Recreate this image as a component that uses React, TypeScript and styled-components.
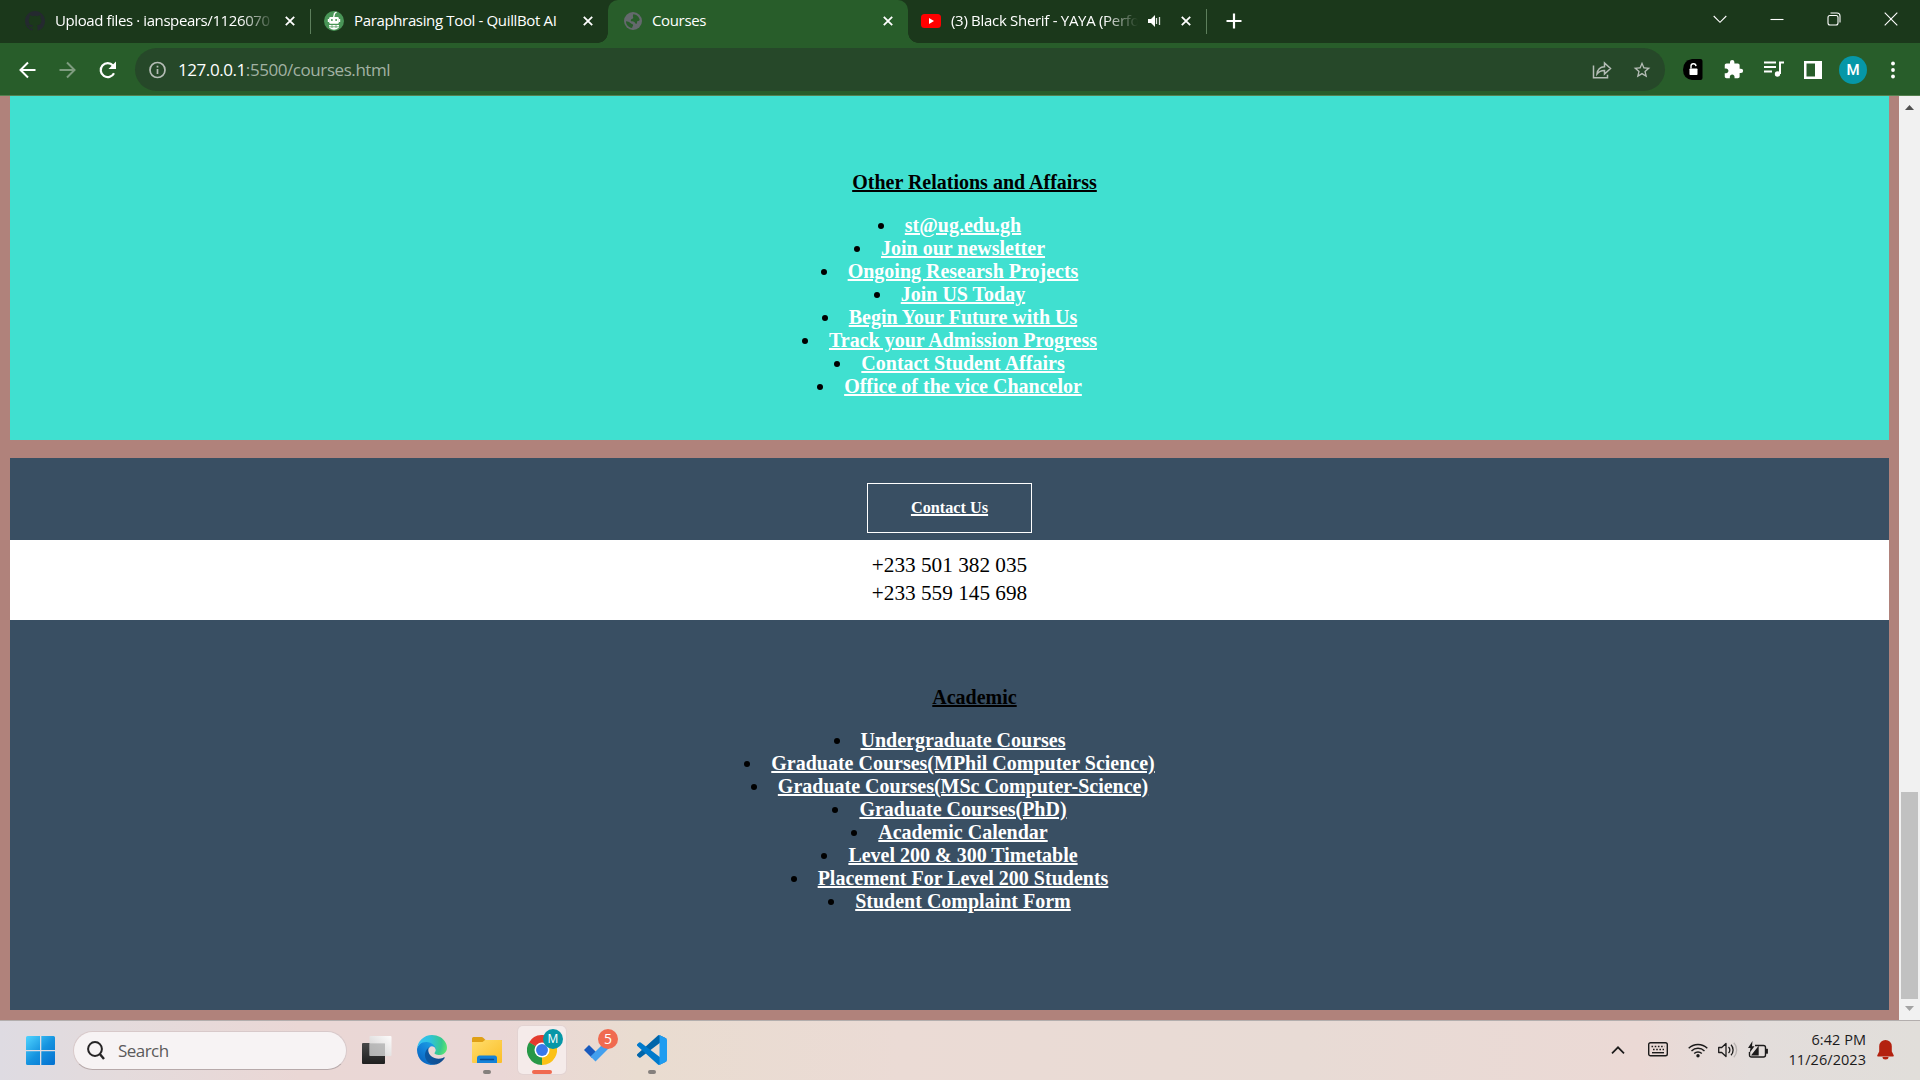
import React from "react";
import styled, { createGlobalStyle, css } from "styled-components";

const Global = createGlobalStyle`
  * { box-sizing: border-box; }
  html, body { margin: 0; padding: 0; overflow: hidden; }
  svg { display: block; flex: none; }
`;

const ui = css`
  font-family: "Open Sans", "Noto Sans", sans-serif;
`;

const Screen = styled.div`
  width: 1920px;
  height: 1080px;
  display: flex;
  flex-direction: column;
  overflow: hidden;
`;

/* ---------- Browser tab strip ---------- */
const TabStrip = styled.div`
  ${ui}
  height: 43px;
  display: flex;
  background: #1b381b;
  color: #fff;
`;

const Tab = styled.div<{ $width: number; $pad: number; $active?: boolean; $gap: number }>`
  position: relative;
  width: ${(p) => p.$width}px;
  height: 43px;
  flex: none;
  display: flex;
  align-items: center;
  padding: 0 15px 1px ${(p) => p.$pad}px;
  gap: ${(p) => p.$gap}px;
  background: ${(p) => (p.$active ? "#285d2a" : "transparent")};
  border-radius: ${(p) => (p.$active ? "10px 10px 0 0" : "0")};
  ${(p) =>
    p.$active &&
    css`
      &::before,
      &::after {
        content: "";
        position: absolute;
        bottom: 0;
        width: 10px;
        height: 10px;
      }
      &::before {
        left: -10px;
        background: radial-gradient(circle at 0 0, transparent 9.5px, #285d2a 10px);
      }
      &::after {
        right: -10px;
        background: radial-gradient(circle at 100% 0, transparent 9.5px, #285d2a 10px);
      }
    `}
`;

const TabTitle = styled.span<{ $fade?: boolean; $track: number }>`
  flex: 1;
  min-width: 0;
  white-space: nowrap;
  font-size: 15px;
  line-height: 22px;
  padding-bottom: 2px;
  letter-spacing: ${(p) => p.$track}px;
  ${(p) => p.$fade && css`mask-image: linear-gradient(to right, #000 calc(100% - 34px), transparent);`}
`;

const Divider = styled.i`
  width: 1px;
  height: 25px;
  margin-top: 9px;
  flex: none;
  background: #5d7f5c;
`;

const NewTab = styled.div`
  display: flex;
  align-items: center;
  padding: 0 0 1px 19px;
  flex: 1;
`;

const WindowButtons = styled.div`
  display: flex;
  height: 37px;
  align-items: center;
  gap: 43px;
  padding-right: 22px;
`;

/* ---------- Toolbar ---------- */
const Toolbar = styled.div`
  ${ui}
  height: 53px;
  display: flex;
  align-items: center;
  padding: 5px 25px 4px 18px;
  background: #285d2a;
  border-bottom: 1px solid #55804f;
`;

const NavButtons = styled.div`
  width: 117px;
  display: flex;
  gap: 20px;
`;

const Omnibox = styled.div`
  width: 1530px;
  height: 43px;
  display: flex;
  align-items: center;
  padding: 0 13px 0 12px;
  border-radius: 22px;
  background: #264829;
`;

const Url = styled.span`
  flex: 1;
  margin-left: 11px;
  font-size: 17px;
  letter-spacing: -0.43px;
  color: #a2b2a3;
  b { font-weight: 400; color: #fff; }
`;

const OmniActions = styled.div`
  display: flex;
  align-items: center;
  gap: 20px;
`;

const Extensions = styled.div`
  flex: 1;
  display: flex;
  align-items: center;
  justify-content: space-between;
  padding-left: 18px;
`;

const Avatar = styled.span`
  width: 28px;
  height: 28px;
  margin: 0 4px 0 -3px;
  border-radius: 50%;
  display: grid;
  place-items: center;
  background: #0697a7;
  color: #fff;
  font: 500 15px Roboto, sans-serif;
`;

/* ---------- Page ---------- */
const Viewport = styled.div`
  height: 924px;
  display: flex;
  background: #b0827b;
`;

const Page = styled.main`
  width: 1899px;
  padding: 0 10px;
  display: flex;
  flex-direction: column;
  font-family: "Liberation Serif", "Times New Roman", serif;
  text-align: center;
`;

const Section = styled.section<{ $bg: string; $height: number; $top: number; $gap?: number }>`
  height: ${(p) => p.$height}px;
  padding-top: ${(p) => p.$top}px;
  margin-bottom: ${(p) => p.$gap ?? 0}px;
  background: ${(p) => p.$bg};
`;

const underlined = css`
  text-decoration: underline;
  text-decoration-thickness: 2px;
  text-underline-offset: 1px;
`;

const Heading = styled.h4`
  margin: 0 0 20px;
  padding-left: 50px;
  font-size: 20px;
  line-height: 23px;
  color: #000;
  ${underlined}
`;

const List = styled.ul`
  margin: 0;
  padding: 0;
  list-style: none;
`;

const Item = styled.li`
  height: 23px;
  display: flex;
  justify-content: center;
  align-items: center;
  font-size: 20px;
  line-height: 23px;
  font-weight: 700;
  &::before {
    content: "";
    width: 6px;
    height: 6px;
    margin: 1px 21px 0 0;
    border-radius: 50%;
    background: #000;
  }
`;

const Link = styled.a`
  color: #fff;
  ${underlined}
`;

const ContactButton = styled.a`
  display: flex;
  align-items: center;
  justify-content: center;
  width: 165px;
  height: 50px;
  margin: 0 auto;
  padding-top: 1px;
  border: 1px solid #fff;
  color: #fff;
  font-size: 16.25px;
  font-weight: 700;
  ${underlined}
`;

const Phone = styled.p`
  margin: 0;
  font-size: 21.25px;
  line-height: 28px;
  color: #000;
`;

const ScrollBar = styled.div`
  width: 21px;
  display: flex;
  flex-direction: column;
  align-items: center;
  justify-content: space-between;
  padding: 9px 0;
  background: #f1f1f1;
`;

const Thumb = styled.div`
  width: 17px;
  height: 207px;
  margin: auto 0 7px;
  background: #c1c1c1;
`;

/* ---------- Taskbar ---------- */
const Taskbar = styled.footer`
  ${ui}
  height: 60px;
  display: flex;
  align-items: center;
  padding: 0 26px 1px;
  border-top: 1px solid #b3aead;
  background: linear-gradient(90deg, #dedbe2 0, #e4dbdc 120px, #ead7d5 300px, #ead7d6 500px, #e9dcd0 640px, #ebdbd5 900px, #e8dbd5 1300px, #ebd9d5 1640px, #e3dddb 1750px, #e1deda 1920px);
`;

const StartButton = styled.span`
  margin-top: 2px;
`;

const SearchBox = styled.div`
  width: 274px;
  height: 39px;
  margin: 1px 15px 0 17px;
  display: flex;
  align-items: center;
  gap: 13px;
  padding-left: 13px;
  border: 1px solid #d8c9ca;
  border-bottom-color: #b7a9aa;
  border-radius: 20px;
  background: #f7f3f4;
  color: #5c5a5b;
  font-size: 17px;
  letter-spacing: -0.55px;
`;

const Apps = styled.div`
  display: flex;
  gap: 7px;
  margin-left: -9px;
`;

const AppButton = styled.div<{ $active?: boolean }>`
  position: relative;
  width: 48px;
  height: 48px;
  display: grid;
  place-items: center;
  border-radius: 5px;
  background: ${(p) => (p.$active ? "#f5ebea" : "transparent")};
  box-shadow: ${(p) => (p.$active ? "0 0 0 1px #e3d3d2" : "none")};
`;

const Running = styled.i<{ $active?: boolean }>`
  position: absolute;
  bottom: 0;
  left: 50%;
  transform: translateX(-50%);
  width: ${(p) => (p.$active ? 20 : 8)}px;
  height: 4px;
  border-radius: 2px;
  background: ${(p) => (p.$active ? "#f06a50" : "#85807d")};
`;

const Badge = styled.span<{ $bg: string; $size: number }>`
  position: absolute;
  top: 3px;
  right: 3px;
  width: 20px;
  height: 20px;
  border-radius: 50%;
  display: grid;
  place-items: center;
  background: ${(p) => p.$bg};
  color: #fff;
  font-size: ${(p) => p.$size}px;
  line-height: 20px;
`;

const Tray = styled.div`
  flex: 1;
  display: flex;
  align-items: center;
  justify-content: flex-end;
`;

const TrayIcon = styled.span<{ $gap: number }>`
  margin-right: ${(p) => p.$gap}px;
  margin-bottom: 1px;
`;

const Clock = styled.div`
  width: 98px;
  margin-right: 11px;
  padding-bottom: 1px;
  text-align: right;
  font-size: 14.5px;
  line-height: 20px;
  letter-spacing: 0.05px;
  white-space: nowrap;
  color: #1c1b1b;
`;

/* ---------- Icons ---------- */
const Close = () => (
  <svg width="10" height="10" viewBox="0 0 10 10" stroke="#fff" strokeWidth="1.8">
    <path d="M.8.8l8.4 8.4M9.2.8L.8 9.2" />
  </svg>
);

const GitHub = () => (
  <svg width="20" height="20" viewBox="0 0 16 16" fill="#24292f">
    <path d="M8 0C3.58 0 0 3.58 0 8c0 3.54 2.29 6.53 5.47 7.59.4.07.55-.17.55-.38v-1.34c-2.23.48-2.69-1.07-2.69-1.07-.36-.92-.89-1.17-.89-1.17-.73-.5.05-.49.05-.49.81.06 1.23.83 1.23.83.72 1.23 1.88.87 2.34.67.07-.52.28-.88.51-1.08-1.78-.2-3.64-.89-3.64-3.95 0-.87.31-1.59.82-2.15-.08-.2-.36-1.02.08-2.12 0 0 .67-.21 2.2.82a7.6 7.6 0 014 0c1.53-1.04 2.2-.82 2.2-.82.44 1.1.16 1.92.08 2.12.51.56.82 1.27.82 2.15 0 3.07-1.87 3.75-3.65 3.95.29.25.54.73.54 1.48v2.2c0 .21.15.46.55.38A8 8 0 0016 8c0-4.42-3.58-8-8-8z" />
  </svg>
);

const QuillBot = () => (
  <svg width="20" height="20" viewBox="0 0 20 20">
    <circle cx="10" cy="10" r="10" fill="#499557" />
    <path d="M9.5 7l1-4.5 2-1.5" stroke="#fff" strokeWidth="1.3" fill="none" />
    <rect x="5.2" y="6" width="9.6" height="6.8" rx="1.2" fill="#fff" />
    <rect x="3.8" y="8" width="1.6" height="3" fill="#fff" />
    <rect x="14.6" y="8" width="1.6" height="3" fill="#fff" />
    <circle cx="7.9" cy="9" r="1" fill="#499557" />
    <circle cx="12.1" cy="9" r="1" fill="#499557" />
    <path d="M5 14h10v2.5Q10 21 5 16.500z" fill="#fff" />
    <path d="M5 15.800h10M8 14v3M12 14v3" stroke="#499557" strokeWidth=".7" />
  </svg>
);

const Globe = () => (
  <svg width="18" height="18" viewBox="0 0 18 18">
    <circle cx="9" cy="9" r="9" fill="#64696d" />
    <path d="M9.500 2.200c2.800.2 5.700 2.400 6.200 5.800-1 1.400-2 .6-2.500 1.500s.4 2-.9 2.200-1.200-1.600-2.300-2c-1-.4-2.800.2-3.200-1-.4-1.300 1.200-1.700 2.200-2.200S8 3.500 9.500 2.200zM2 9.200c1.800.5 3.400.6 4.300 1.700s2.600.8 2.800 2c.2 1-.9 1.300-1 3C4.500 15.500 1.900 12.700 2 9.200z" fill="#285d2a" />
  </svg>
);

const YouTube = () => (
  <svg width="20" height="14" viewBox="0 0 20 14">
    <rect width="20" height="14" rx="3.500" fill="#f00" />
    <path d="M8 4l5 3-5 3z" fill="#fff" />
  </svg>
);

const Speaker = () => (
  <svg width="13" height="12" viewBox="0 0 13 12" fill="#fff">
    <path d="M0 4h3l4-4v12L3 8H0z" />
    <path d="M8.500 3v6M11.500 2v8" stroke="#fff" strokeWidth="1.300" opacity=".85" />
  </svg>
);

const Plus = () => (
  <svg width="16" height="16" viewBox="0 0 16 16" stroke="#fff" strokeWidth="2.200">
    <path d="M8 .5v15M.5 8h15" />
  </svg>
);

const Arrow = ({ flip }: { flip?: boolean }) => (
  <svg width="20" height="20" viewBox="0 0 20 20" fill="none" stroke={flip ? "#7e9c7f" : "#fff"} strokeWidth="2">
    <path d={flip ? "M1.500 10h15M9 2.500l7.500 7.500-7.500 7.500" : "M17.500 10h-15M10 2.500L2.500 10l7.500 7.500"} />
  </svg>
);

const Reload = () => (
  <svg width="20" height="20" viewBox="0 0 20 20" fill="none" stroke="#fff" strokeWidth="2.200">
    <path d="M16 13.200A7 7 0 1 1 15 5.500" />
    <path d="M18 1.500v7.500H10.500z" fill="#fff" stroke="none" />
  </svg>
);

const Info = () => (
  <svg width="20" height="20" viewBox="0 0 20 20" fill="none" stroke="#b5bdb6" strokeWidth="1.700">
    <circle cx="10.500" cy="10" r="7.500" />
    <path d="M10.500 9v5M10.500 5.800v1.700" />
  </svg>
);

const Share = () => (
  <svg width="20" height="18" viewBox="0 0 20 18" fill="none" stroke="#b5bdb6" strokeWidth="1.500">
    <path d="M1.500 4.500v12.300h14v-3" />
    <path d="M5 13c.5-4.500 3-7 7.500-7.200V2l6 5.500-6 5.500V9.500C9.300 9.400 7 10.500 5 13z" />
  </svg>
);

const Star = () => (
  <svg width="20" height="20" viewBox="0 0 24 24" fill="#b5bdb6">
    <path d="M22 9.240l-7.190-.62L12 2 9.190 8.630 2 9.240l5.460 4.730L5.820 21 12 17.270 18.180 21l-1.630-7.030L22 9.240zM12 15.400l-3.760 2.270 1-4.280-3.320-2.880 4.380-.38L12 6.100l1.710 4.040 4.380.38-3.320 2.880 1 4.280L12 15.400z" />
  </svg>
);

const LockExt = () => (
  <svg width="20" height="21" viewBox="0 0 20 21">
    <path d="M9 0h8.500Q19.500 0 19.500 2v17q0 2-2 2H9Q0 19.500 0 10.500T9 0z" fill="#000" />
    <rect x="6.500" y="9.500" width="8" height="6.500" rx=".8" fill="#fff" />
    <path d="M8 9.500V7.500a2.500 2.500 0 0 1 5-.4" fill="none" stroke="#fff" strokeWidth="1.400" />
  </svg>
);

const Puzzle = () => (
  <svg width="21" height="21" viewBox="0 0 24 24" fill="#fff">
    <path d="M20.500 11H19V7c0-1.100-.9-2-2-2h-4V3.500a2.500 2.500 0 0 0-5 0V5H4c-1.100 0-1.990.9-1.990 2v3.800H3.500c1.490 0 2.700 1.210 2.700 2.700s-1.210 2.700-2.700 2.700H2V20c0 1.100.9 2 2 2h3.800v-1.500c0-1.490 1.210-2.700 2.700-2.700s2.700 1.210 2.700 2.700V22H17c1.100 0 2-.9 2-2v-4h1.500a2.500 2.500 0 0 0 0-5z" />
  </svg>
);

const Playlist = () => (
  <svg width="20" height="17" viewBox="0 0 20 17" fill="none" stroke="#fff" strokeWidth="2">
    <path d="M0 1.500h12M0 6h12M0 10.500h8M16 13V1.500h4" />
    <circle cx="13.500" cy="13" r="2.700" fill="#fff" stroke="none" />
  </svg>
);

const SidePanel = () => (
  <svg width="18" height="18" viewBox="0 0 18 18">
    <path d="M0 0h18v18H0zM2.500 2.500v13h8.500v-13z" fill="#fff" fillRule="evenodd" />
  </svg>
);

const Dots = () => (
  <svg width="4" height="18" viewBox="0 0 4 18" fill="#fff">
    <circle cx="2" cy="2.500" r="1.900" /><circle cx="2" cy="9" r="1.900" /><circle cx="2" cy="15.500" r="1.900" />
  </svg>
);

const WinIcon = ({ d }: { d: string }) => (
  <svg width="14" height="14" viewBox="0 0 14 14" fill="none" stroke="#fff" strokeWidth="1.100">
    <path d={d} />
  </svg>
);

const Triangle = ({ down }: { down?: boolean }) => (
  <svg width="9" height="5" viewBox="0 0 9 5" fill={down ? "#a3a3a3" : "#505050"}>
    <path d={down ? "M0 0h9L4.500 5z" : "M0 5h9L4.500 0z"} />
  </svg>
);

const Windows = () => (
  <svg width="30" height="30" viewBox="0 0 30 30">
    <defs>
      <linearGradient id="win" gradientUnits="userSpaceOnUse" x1="0" y1="0" x2="26" y2="28">
        <stop offset="0" stopColor="#50d4ff" /><stop offset=".55" stopColor="#1593df" /><stop offset="1" stopColor="#0574d2" />
      </linearGradient>
    </defs>
    <path fill="url(#win)" d="M1.500 0H14v14H0V1.500Q0 0 1.500 0zM15.300 0h12.200Q29 0 29 1.500V14H15.300zM0 15.300h14V29H1.500Q0 29 0 27.500zM15.300 15.300H29v12.200q0 1.500-1.500 1.500H15.300z" />
  </svg>
);

const SearchIcon = () => (
  <svg width="18" height="19" viewBox="0 0 18 19" fill="none" stroke="#262425" strokeWidth="2">
    <circle cx="8" cy="8" r="6.900" /><path d="M12.800 13l4.200 5" strokeWidth="2.400" />
  </svg>
);

const TaskView = () => (
  <svg width="30" height="30" viewBox="0 0 30 30">
    <defs>
      <linearGradient id="tv1" x1="0" y1="0" x2="0" y2="1"><stop offset="0" stopColor="#484848" /><stop offset="1" stopColor="#1f1f1f" /></linearGradient>
      <linearGradient id="tv2" x1="0" y1="1" x2="1" y2="0"><stop offset="0" stopColor="#ccc" /><stop offset="1" stopColor="#fff" /></linearGradient>
    </defs>
    <rect x="0" y="8" width="23" height="21" rx="1" fill="url(#tv1)" />
    <rect x="7.500" y="1" width="22" height="20" rx="1" fill="url(#tv2)" opacity=".93" />
    <path d="M7.500 8.500H23V21H7.500z" fill="#aaa" opacity=".65" />
  </svg>
);

const Edge = () => (
  <svg width="30" height="30" viewBox="0 0 256 256">
    <defs>
      <linearGradient id="e1" gradientUnits="userSpaceOnUse" x1="63" y1="177" x2="241" y2="177"><stop offset="0" stopColor="#0c59a4" /><stop offset="1" stopColor="#114a8b" /></linearGradient>
      <linearGradient id="e2" gradientUnits="userSpaceOnUse" x1="157" y1="100" x2="46" y2="222"><stop offset="0" stopColor="#1b9de2" /><stop offset=".5" stopColor="#1383d9" /><stop offset="1" stopColor="#0b6ac4" /></linearGradient>
      <radialGradient id="e3" gradientUnits="userSpaceOnUse" cx="26" cy="60" r="245"><stop offset="0" stopColor="#35c1f1" /><stop offset=".35" stopColor="#2fc2df" /><stop offset=".75" stopColor="#36c98e" /><stop offset="1" stopColor="#66eb6e" /></radialGradient>
    </defs>
    <path d="M231 190.500c-3.400 1.800-6.900 3.400-10.500 4.700a101.900 101.900 0 0 1-35.900 6.500c-47.300 0-88.500-32.500-88.500-74.300a31.500 31.500 0 0 1 16.400-27.300c-42.800 1.800-53.800 46.400-53.800 72.500 0 74 68.100 81.400 82.800 81.400 7.900 0 19.800-2.300 27-4.600l1.300-.4a128.300 128.300 0 0 0 66.600-52.800 4 4 0 0 0-5.400-5.700z" fill="url(#e1)" />
    <path d="M105.700 241.400a79.200 79.200 0 0 1-22.700-21.300 80.700 80.700 0 0 1 29.500-120c3.200-1.500 8.500-4.100 15.600-4a32.400 32.400 0 0 1 25.700 13 31.900 31.900 0 0 1 6.300 18.700c0-.2 24.500-79.600-80-79.600-43.900 0-80 41.700-80 78.200a130.200 130.200 0 0 0 12.100 56 128 128 0 0 0 156.400 67 75.500 75.500 0 0 1-62.900-8z" fill="url(#e2)" />
    <path d="M152.300 148.900c-.9 1-3.400 2.500-3.400 5.600 0 2.600 1.700 5.200 4.800 7.300 14.300 10 41.400 8.600 41.500 8.600a59.600 59.600 0 0 0 30.300-8.300 61.400 61.400 0 0 0 30.400-52.900c.3-22.400-8-37.300-11.300-43.900C223.500 23.900 177.700 0 128 0A128 128 0 0 0 0 126.200c.5-36.500 36.800-66 80-66 3.500 0 23.500.3 42 10a72.600 72.600 0 0 1 30.900 29.300c6.100 10.600 7.200 24.100 7.200 29.500s-2.700 13.300-7.800 19.900z" fill="url(#e3)" />
  </svg>
);

const Explorer = () => (
  <svg width="30" height="30" viewBox="0 0 30 30">
    <defs><linearGradient id="fe" x1="0" y1="0" x2="1" y2="1"><stop offset="0" stopColor="#ffdd6c" /><stop offset="1" stopColor="#fbbe27" /></linearGradient></defs>
    <path d="M0 3.500Q0 2 1.500 2h8q1 0 2 1l2 2H29q1 0 1 1v8H0z" fill="#dfa016" />
    <path d="M0 7h10.500l2.500-2h16q1 0 1 1v21q0 1-1 1H1q-1 0-1-1z" fill="url(#fe)" />
    <path d="M5 28v-5q0-2.500 2.500-2.500h15q2.500 0 2.500 2.500v5z" fill="#1482d8" />
    <path d="M8.500 24.500h13" stroke="#0a4a8d" strokeWidth="1.400" strokeLinecap="round" />
  </svg>
);

const Chrome = () => (
  <svg width="30" height="30" viewBox="0 0 48 48">
    <path d="M24 24L3.200 12A24 24 0 0 1 44.800 12z" fill="#e33b2e" />
    <path d="M24 24L44.800 12A24 24 0 0 1 24 48z" fill="#fbc116" />
    <path d="M24 24L24 48A24 24 0 0 1 3.200 12z" fill="#279847" />
    <path d="M24 12h20.800L24 24z" fill="#e33b2e" />
    <path d="M34.400 30L24 48l0-20z" fill="#fbc116" />
    <path d="M13.600 30L3.200 12 24 24z" fill="#279847" />
    <circle cx="24" cy="24" r="12" fill="#fff" /><circle cx="24" cy="24" r="9.500" fill="#3978ea" />
  </svg>
);

const Todo = () => (
  <svg width="30" height="30" viewBox="0 0 30 30">
    <path d="M2 15L7 10l8 8-5 5z" fill="#185abd" />
    <path d="M8.500 21.500L23 7l5 5L13.500 26.500z" fill="#429fee" />
  </svg>
);

const VSCode = () => (
  <svg width="30" height="30" viewBox="0 0 100 100">
    <path d="M96.500 10.800L75.900.9a6.200 6.200 0 0 0-7.100 1.200L1.300 63.600a4.200 4.200 0 0 0 0 6.200l5.500 5a4.200 4.200 0 0 0 5.300.2L93.300 13.400A4.100 4.100 0 0 1 100 16.700v-.2a6.300 6.300 0 0 0-3.500-5.700z" fill="#0065a9" />
    <path d="M96.500 89.200l-20.600 9.900a6.200 6.200 0 0 1-7.100-1.200L1.300 36.400a4.200 4.200 0 0 1 0-6.200l5.500-5a4.200 4.200 0 0 1 5.300-.2l81.200 61.600a4.100 4.100 0 0 0 6.700-3.300v.2a6.300 6.300 0 0 1-3.500 5.700z" fill="#007acc" />
    <path d="M75.900 99.100a6.200 6.200 0 0 1-7.100-1.200 3.700 3.700 0 0 0 6.200-2.600V4.700a3.700 3.700 0 0 0-6.200-2.600A6.200 6.200 0 0 1 75.900.9l20.600 9.900a6.200 6.200 0 0 1 3.500 5.600v67.200a6.200 6.200 0 0 1-3.500 5.600z" fill="#1f9cf0" />
  </svg>
);

const Chevron = () => (
  <svg width="14" height="8" viewBox="0 0 14 8" fill="none" stroke="#1c1b1b" strokeWidth="1.700"><path d="M1 7.300L7 1.300l6 6" /></svg>
);

const Keyboard = () => (
  <svg width="20" height="15" viewBox="0 0 20 15" fill="none" stroke="#1c1b1b" strokeWidth="1.400">
    <rect x=".7" y=".7" width="18.600" height="13" rx="1.800" />
    <path d="M3.500 4.500h13M5 7.500h11" strokeDasharray="1.600 1.600" /><path d="M4 10.700h12" />
  </svg>
);

const Wifi = () => (
  <svg width="20" height="16" viewBox="0 0 20 16" fill="none" stroke="#1c1b1b" strokeWidth="1.400">
    <path d="M.7 6.300a13.200 13.200 0 0 1 18.600 0M3.500 9a9.200 9.200 0 0 1 13 0M6.200 11.500a5.400 5.400 0 0 1 7.600 0" />
    <circle cx="10" cy="13.800" r="1.700" fill="#1c1b1b" stroke="none" />
  </svg>
);

const Volume = () => (
  <svg width="20" height="16" viewBox="0 0 20 16" fill="none" stroke="#1c1b1b" strokeWidth="1.300">
    <path d="M.7 5.500h3L8 1.500v13l-4.300-4h-3z" strokeLinejoin="round" />
    <path d="M10.500 5a4 4 0 0 1 0 6M13 2.800a7.500 7.500 0 0 1 0 10.400" />
    <path d="M15.800.8a10.500 10.500 0 0 1 0 14.400" stroke="#b9b3b1" />
  </svg>
);

const Battery = () => (
  <svg width="20" height="17" viewBox="0 0 20 17" fill="none" stroke="#1c1b1b" strokeWidth="1.400">
    <path d="M7 4.500h8.500q2 0 2 2V14q0 2-2 2h-12q-2 0-2-2v-3" />
    <path d="M18 8.500h1.200v3.500H18z" fill="#1c1b1b" />
    <path d="M4.500 13.700L10 6.800v6.900z" fill="#1c1b1b" />
    <path d="M4.500 0L0 7h2.500L1.500 12 6.500 5.200H4z" fill="#1c1b1b" stroke="none" />
  </svg>
);

const Bell = () => (
  <svg width="17" height="20" viewBox="0 0 17 20" fill="#b3210f">
    <path d="M8.500 0a6.300 6.300 0 0 1 6.300 6.300v5.200l2 4q.2 1-.8 1H1q-1 0-.8-1l2-4V6.300A6.300 6.300 0 0 1 8.500 0zM5.500 17h6a3 2.500 0 0 1-6 0z" />
  </svg>
);

const relations = [
  "st@ug.edu.gh", "Join our newsletter", "Ongoing Researsh Projects", "Join US Today",
  "Begin Your Future with Us", "Track your Admission Progress", "Contact Student Affairs", "Office of the vice Chancelor",
];
const academic = [
  "Undergraduate Courses", "Graduate Courses(MPhil Computer Science)", "Graduate Courses(MSc Computer-Science)",
  "Graduate Courses(PhD)", "Academic Calendar", "Level 200 & 300 Timetable", "Placement For Level 200 Students", "Student Complaint Form",
];

const LinkList = ({ title, items }: { title: string; items: string[] }) => (
  <>
    <Heading>{title}</Heading>
    <List>
      {items.map((t) => (
        <Item key={t}><Link>{t}</Link></Item>
      ))}
    </List>
  </>
);

export default function App() {
  return (
    <Screen>
      <Global />
      <TabStrip>
        <Tab $width={310} $pad={25} $gap={10}>
          <GitHub /><TabTitle $fade $track={-0.4}>Upload files · ianspears/1126070</TabTitle><Close />
        </Tab>
        <Divider />
        <Tab $width={297} $pad={13} $gap={10}>
          <QuillBot /><TabTitle $track={-0.35}>Paraphrasing Tool - QuillBot AI</TabTitle><Close />
        </Tab>
        <Tab $width={300} $pad={16} $gap={10} $active>
          <Globe /><TabTitle $track={-0.35}>Courses</TabTitle><Close />
        </Tab>
        <Tab $width={298} $pad={13} $gap={10}>
          <YouTube /><TabTitle $fade $track={-0.3}>(3) Black Sherif - YAYA (Perfo</TabTitle><Speaker /><span /><Close />
        </Tab>
        <Divider />
        <NewTab><Plus /></NewTab>
        <WindowButtons>
          <WinIcon d="M.7 4l6.300 6.300L13.300 4" />
          <WinIcon d="M.500 7.500h13" />
          <WinIcon d="M3 3.500h6q2 0 2 2V11q0 2-2 2H3q-2 0-2-2V5.500q0-2 2-2zM3.500 1h6.500q3 0 3 3v6.500" />
          <WinIcon d="M.7.7l12.600 12.600M13.300.7L.7 13.300" />
        </WindowButtons>
      </TabStrip>
      <Toolbar>
        <NavButtons><Arrow /><Arrow flip /><Reload /></NavButtons>
        <Omnibox>
          <Info />
          <Url><b>127.0.0.1</b>:5500/courses.html</Url>
          <OmniActions><Share /><Star /></OmniActions>
        </Omnibox>
        <Extensions>
          <LockExt /><Puzzle /><Playlist /><SidePanel /><Avatar>M</Avatar><Dots />
        </Extensions>
      </Toolbar>
      <Viewport>
        <Page>
          <Section $bg="#40e0d0" $height={344} $top={75} $gap={18}>
            <LinkList title="Other Relations and Affairss" items={relations} />
          </Section>
          <Section $bg="#394f63" $height={82} $top={25}>
            <ContactButton>Contact Us</ContactButton>
          </Section>
          <Section $bg="#fff" $height={80} $top={11}>
            <Phone>+233 501 382 035</Phone>
            <Phone>+233 559 145 698</Phone>
          </Section>
          <Section $bg="#394f63" $height={390} $top={66}>
            <LinkList title="Academic" items={academic} />
          </Section>
        </Page>
        <ScrollBar>
          <Triangle /><Thumb /><Triangle down />
        </ScrollBar>
      </Viewport>
      <Taskbar>
        <StartButton><Windows /></StartButton>
        <SearchBox><SearchIcon />Search</SearchBox>
        <Apps>
          <AppButton><TaskView /></AppButton>
          <AppButton><Edge /></AppButton>
          <AppButton><Explorer /><Running /></AppButton>
          <AppButton $active><Chrome /><Badge $bg="#0697a7" $size={12}>M</Badge><Running $active /></AppButton>
          <AppButton><Todo /><Badge $bg="#f06a50" $size={14}>5</Badge></AppButton>
          <AppButton><VSCode /><Running /></AppButton>
        </Apps>
        <Tray>
          <TrayIcon $gap={23}><Chevron /></TrayIcon>
          <TrayIcon $gap={20}><Keyboard /></TrayIcon>
          <TrayIcon $gap={10}><Wifi /></TrayIcon>
          <TrayIcon $gap={10}><Volume /></TrayIcon>
          <TrayIcon $gap={0}><Battery /></TrayIcon>
          <Clock>6:42 PM<br />11/26/2023</Clock>
          <Bell />
        </Tray>
      </Taskbar>
    </Screen>
  );
}
